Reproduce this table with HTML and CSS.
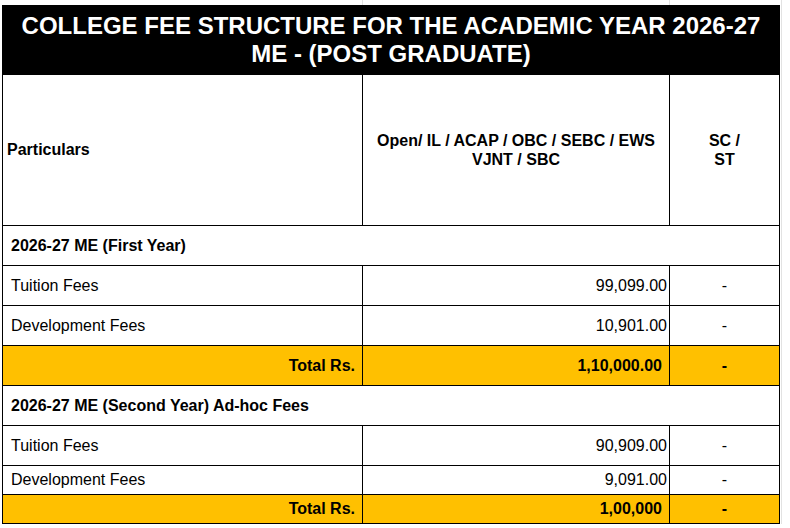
FILE: index.html
```html
<!DOCTYPE html>
<html lang="en">
<head>
<meta charset="utf-8">
<title>College Fee Structure 2026-27 ME</title>
<link rel="stylesheet" href="styles.css">
</head>
<body>
<div class="page">
  <div class="topgrid">
    <div class="tg tg1"></div>
    <div class="tg tg2"></div>
    <div class="tg tg3"></div>
  </div>
  <div class="row">
    <div class="sheet">
      <div class="cell title">COLLEGE FEE STRUCTURE FOR THE ACADEMIC YEAR 2026-27<br>ME - (POST GRADUATE)</div>

      <div class="cell head left">Particulars</div>
      <div class="cell head mid">Open/ IL / ACAP / OBC / SEBC / EWS<br>VJNT / SBC</div>
      <div class="cell head mid">SC /<br>ST</div>

      <div class="cell section">2026-27 ME (First Year)</div>

      <div class="cell label">Tuition Fees</div>
      <div class="cell num">99,099.00</div>
      <div class="cell dash">-</div>

      <div class="cell label">Development Fees</div>
      <div class="cell num">10,901.00</div>
      <div class="cell dash">-</div>

      <div class="cell total tlabel">Total Rs.</div>
      <div class="cell total tnum">1,10,000.00</div>
      <div class="cell total tdash">-</div>

      <div class="cell section">2026-27 ME (Second Year) Ad-hoc Fees</div>

      <div class="cell label">Tuition Fees</div>
      <div class="cell num">90,909.00</div>
      <div class="cell dash">-</div>

      <div class="cell label">Development Fees</div>
      <div class="cell num">9,091.00</div>
      <div class="cell dash">-</div>

      <div class="cell total tlabel">Total Rs.</div>
      <div class="cell total tnum">1,00,000</div>
      <div class="cell total tdash">-</div>
    </div>
    <div class="rightgrid"></div>
  </div>
</div>
</body>
</html>
```

FILE: styles.css
```css
html, body {
  margin: 0;
  padding: 0;
  background: #ffffff;
}

.page {
  display: flex;
  flex-direction: column;
  font-family: "Liberation Sans", Arial, sans-serif;
  color: #000000;
}

.topgrid {
  display: flex;
  height: 5px;
}

.tg1 {
  width: 362px;
  border-right: 1px solid #e2e2e2;
}

.tg2 {
  width: 306px;
  border-right: 1px solid #e2e2e2;
}

.tg3 {
  width: 111px;
  border-right: 1px solid #e2e2e2;
}

.row {
  display: flex;
}

.sheet {
  margin-left: 2px;
  display: grid;
  grid-template-columns: 359px 306px 109px;
  grid-template-rows: 68px 150px 39px 39px 39px 39px 39px 39px 28px 28px;
  gap: 1px;
  padding: 1px;
  background: #000000;
}

.rightgrid {
  width: 1px;
  border-right: 1px solid #e2e2e2;
}

.cell {
  background: #ffffff;
  display: flex;
  align-items: center;
  font-size: 16px;
  line-height: 18px;
  white-space: nowrap;
}

.title {
  grid-column: 1 / 4;
  background: #000000;
  color: #ffffff;
  font-weight: bold;
  font-size: 24px;
  line-height: 28px;
  justify-content: center;
  text-align: center;
}

.head {
  font-weight: bold;
}

.head.left {
  padding-left: 4px;
}

.head.mid {
  justify-content: center;
  text-align: center;
  line-height: 19px;
}

.section {
  grid-column: 1 / 4;
  font-weight: bold;
  padding-left: 8px;
}

.label {
  padding-left: 8px;
}

.num {
  justify-content: flex-end;
  padding-right: 2px;
}

.dash {
  justify-content: center;
}

.total {
  background: #ffc000;
  font-weight: bold;
}

.tlabel,
.tnum {
  justify-content: flex-end;
  padding-right: 7px;
}

.tdash {
  justify-content: center;
}
```
